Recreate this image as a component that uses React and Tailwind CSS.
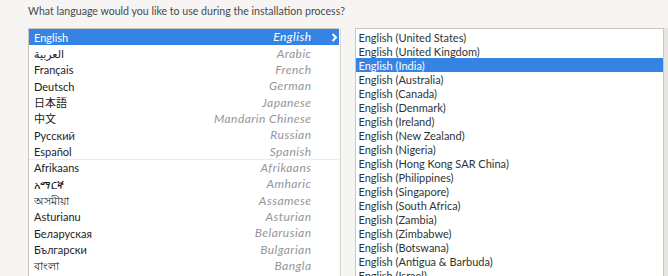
import React from 'react';

const languages = [
  ['English', 'English'],
  ['العربية', 'Arabic'],
  ['Français', 'French'],
  ['Deutsch', 'German'],
  ['日本語', 'Japanese'],
  ['中文', 'Mandarin Chinese'],
  ['Русский', 'Russian'],
  ['Español', 'Spanish'],
  ['Afrikaans', 'Afrikaans'],
  ['አማርኛ', 'Amharic'],
  ['অসমীয়া', 'Assamese'],
  ['Asturianu', 'Asturian'],
  ['Беларуская', 'Belarusian'],
  ['Български', 'Bulgarian'],
  ['বাংলা', 'Bangla'],
];

const locales = [
  'United States',
  'United Kingdom',
  'India',
  'Australia',
  'Canada',
  'Denmark',
  'Ireland',
  'New Zealand',
  'Nigeria',
  'Hong Kong SAR China',
  'Philippines',
  'Singapore',
  'South Africa',
  'Zambia',
  'Zimbabwe',
  'Botswana',
  'Antigua & Barbuda',
  'Israel',
];

const font = { fontFamily: 'Lato, "Noto Sans", "DejaVu Sans", "Noto Sans CJK JP", sans-serif' };

const App = () => {
  return (
    <div className="w-[668px] h-[276px] overflow-hidden bg-[#f6f5f4] text-[#2e3436]" style={font}>
      <div className="pl-[28px] pt-[4px] h-[28px] text-[10.6px] text-[#46494a]">
        What language would you like to use during the installation process?
      </div>
      <div className="flex">
        {/* languages */}
        <div className="ml-[28px] w-[311px] bg-white border-l border-t border-[#cdc7c2]">
          {languages.map(([native, english], i) => (
            <div key={english}>
              <div
                className={
                  'flex items-center h-[16.35px] pl-[5px] pr-px ' +
                  (i === 0 ? 'bg-[#3584e4] text-white' : 'text-[#1e2122]')
                }
              >
                <span className="flex-1 text-[11px] leading-none">{native}</span>
                <span
                  className={
                    'italic text-[12px] tracking-[0.45px] leading-none ' +
                    (i === 0 ? 'text-white' : 'text-[#939698]')
                  }
                >
                  {english}
                </span>
                <span className="w-[26px] flex justify-end">
                  {i === 0 && (
                    <svg width="7" height="9" viewBox="0 0 7 9">
                      <path d="M1.5 1 L5 4.5 L1.5 8" fill="none" stroke="white" strokeWidth="2" />
                    </svg>
                  )}
                </span>
              </div>
              {i === 7 && <div className="h-px bg-[#ecebe9] -mt-px" />}
            </div>
          ))}
        </div>
        <div className="w-px bg-[#dcd8d4] ml-[1px]" />
        {/* locales */}
        <div className="ml-[14px] w-[310px] bg-white border-l border-t border-r border-[#cdc7c2] pt-[1px]">
          {locales.map((loc, i) => (
            <div
              key={loc}
              className={
                'flex items-center h-[14px] pl-[3px] text-[11px] leading-none ' +
                (i === 2 ? 'bg-[#3584e4] text-white' : 'text-[#2e3436]')
              }
            >
              English ({loc})
            </div>
          ))}
        </div>
        <div className="w-[4px] bg-[#e8e6e3]" />
      </div>
    </div>
  );
};

export default App;
